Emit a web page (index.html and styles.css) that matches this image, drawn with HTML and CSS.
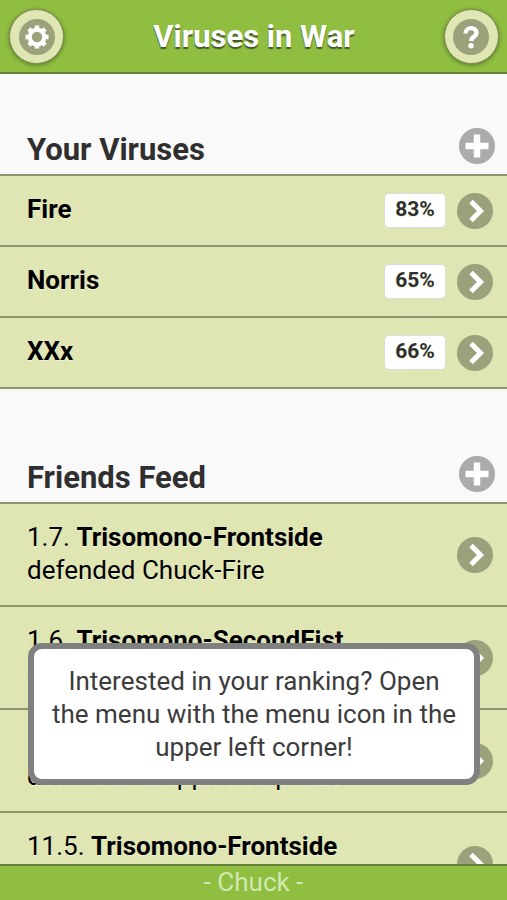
FILE: index.html
```html
<!DOCTYPE html>
<html lang="en">
<head>
    <meta charset="UTF-8">
    <meta name="viewport" content="width=device-width, initial-scale=1.0">
    <title>Viruses in War</title>
    <link rel="stylesheet" href="styles.css">
</head>
<body>
    <svg class="defs" aria-hidden="true">
        <symbol id="arrow" viewBox="0 0 36 36">
            <path d="M14 8.5l9.500 9.500-9.500 9.500" fill="none" stroke="#fff" stroke-width="5"/>
        </symbol>
        <symbol id="plus" viewBox="0 0 36 36">
            <path d="M18 6.500v23M6.500 18h23" fill="none" stroke="#fff" stroke-width="6.500"/>
        </symbol>
        <symbol id="gear" viewBox="0 0 36 36">
            <circle cx="18" cy="18" r="7.300" fill="none" stroke="#fff" stroke-width="4.200"/>
            <g stroke="#fff" stroke-width="4.400">
                <path d="M18 6.500v4M18 25.500v4M6.500 18h4M25.500 18h4"/>
                <path d="M9.900 9.900l2.800 2.800M23.300 23.300l2.800 2.800M9.900 26.100l2.800-2.800M23.300 12.700l2.800-2.800"/>
            </g>
        </symbol>
        <symbol id="help" viewBox="0 0 36 36">
            <path d="M12.500 14.500c0-7 11-7 11-.8 0 4.300-5.300 3.800-5.300 8.300" fill="none" stroke="#fff" stroke-width="4.400"/>
            <circle cx="18" cy="26.800" r="2.700" fill="#fff"/>
        </symbol>
    </svg>
    <header>
        <button class="round" aria-label="Menu"><svg class="icon"><use href="#gear"/></svg></button>
        <h1>Viruses in War</h1>
        <button class="round" aria-label="Help"><svg class="icon"><use href="#help"/></svg></button>
    </header>
    <main>
        <section>
            <div class="title">
                <h2>Your Viruses</h2>
                <button class="add" aria-label="Add virus"><svg class="icon"><use href="#plus"/></svg></button>
            </div>
            <ul>
                <li><a href="#fire"><b class="text">Fire</b><span class="badge">83%</span><svg class="icon"><use href="#arrow"/></svg></a></li>
                <li><a href="#norris"><b class="text">Norris</b><span class="badge">65%</span><svg class="icon"><use href="#arrow"/></svg></a></li>
                <li><a href="#xxx"><b class="text">XXx</b><span class="badge">66%</span><svg class="icon"><use href="#arrow"/></svg></a></li>
            </ul>
        </section>
        <section>
            <div class="title">
                <h2>Friends Feed</h2>
                <button class="add" aria-label="Add friend"><svg class="icon"><use href="#plus"/></svg></button>
            </div>
            <ul class="feed">
                <li><a href="#feed1"><span class="text">1.7. <b>Trisomono-Frontside</b><br>defended Chuck-Fire</span><svg class="icon"><use href="#arrow"/></svg></a></li>
                <li><a href="#feed2"><span class="text">1.6. <b>Trisomono-SecondFist</b><br>defended Chuck-Fire</span><svg class="icon"><use href="#arrow"/></svg></a></li>
                <li><a href="#feed3"><span class="text">1.6. <b>Trisomono-Frontside</b><br>defended Skipplin-Skiplinzo</span><svg class="icon"><use href="#arrow"/></svg></a></li>
                <li><a href="#feed4"><span class="text">11.5. <b>Trisomono-Frontside</b></span><svg class="icon"><use href="#arrow"/></svg></a></li>
            </ul>
        </section>
    </main>
    <footer>- Chuck -</footer>
    <div class="hint" role="status">Interested in your ranking? Open the menu with the menu icon in the upper left corner!</div>
</body>
</html>
```
FILE: styles.css
```css
* {
    box-sizing: border-box;
}
body {
    margin: 0;
    height: 100vh;
    display: flex;
    flex-direction: column;
    overflow: hidden;
    background-color: #f9f9f9;
    font-family: Roboto, sans-serif;
    font-size: 26px;
    line-height: 33px;
    color: #000;
}
.defs {
    position: absolute;
    width: 0;
    height: 0;
}
.icon {
    display: block;
    flex: none;
    width: 36px;
    height: 36px;
    border-radius: 50%;
    background-color: #9ba17b;
}
button {
    padding: 0;
    border: 0;
    background: none;
    cursor: pointer;
}
header {
    flex: none;
    display: flex;
    align-items: center;
    justify-content: space-between;
    padding: 9px 8px 8px 9px;
    background-color: #8fbe41;
    border-bottom: 2px solid #648137;
}
h1 {
    margin: 0;
    font-size: 31px;
    color: #fff;
    text-shadow: 0 2px 1px #44552a;
}
.round {
    display: grid;
    place-items: center;
    width: 55px;
    height: 55px;
    border: 1px solid #7f8a56;
    border-radius: 50%;
    background-color: #dfe6b3;
    box-shadow: 0 1px 4px rgba(0, 0, 0, 0.4);
}
main {
    flex: 1;
    min-height: 0;
    overflow: hidden;
}
.title {
    display: flex;
    align-items: flex-end;
    justify-content: space-between;
    height: 100px;
    padding: 0 12px 8px 27px;
}
section + section .title {
    height: 113px;
}
h2 {
    margin: 0;
    font-size: 31px;
    color: #2f2f2f;
}
.add .icon {
    background-color: #ababab;
    margin-bottom: 2px;
}
ul {
    margin: 0;
    padding: 0;
    list-style: none;
    border-bottom: 2px solid #8f946f;
}
li {
    border-top: 2px solid #8f946f;
    background-color: #dfe6b3;
}
li a {
    display: flex;
    align-items: center;
    gap: 11px;
    height: 69px;
    padding: 0 14px 0 27px;
    color: inherit;
    text-decoration: none;
    text-shadow: 0 1px 0 #eef2d2;
}
.feed a {
    height: 101px;
}
.feed li:last-child a {
    align-items: flex-start;
    padding-top: 17px;
}
.feed li:last-child .icon {
    margin-top: 16px;
}
.text {
    flex: 1;
    padding-bottom: 2px;
}
.badge {
    width: 62px;
    height: 35px;
    border: 1px solid #dcdcdc;
    border-radius: 5px;
    background-color: #fff;
    font-size: 21px;
    font-weight: bold;
    line-height: 30px;
    text-align: center;
    color: #2f2f2f;
}
footer {
    flex: none;
    height: 36px;
    border-top: 2px solid #648137;
    background-color: #8fbe41;
    line-height: 32px;
    text-align: center;
    color: #d3e8b0;
}
/* floating tip over the feed */
.hint {
    position: fixed;
    left: 28px;
    right: 27px;
    bottom: 115px;
    padding: 16px 16px 15px;
    border: 6px solid #808080;
    border-radius: 14px;
    background-color: #fff;
    text-align: center;
    color: #3c3c3c;
}
```
